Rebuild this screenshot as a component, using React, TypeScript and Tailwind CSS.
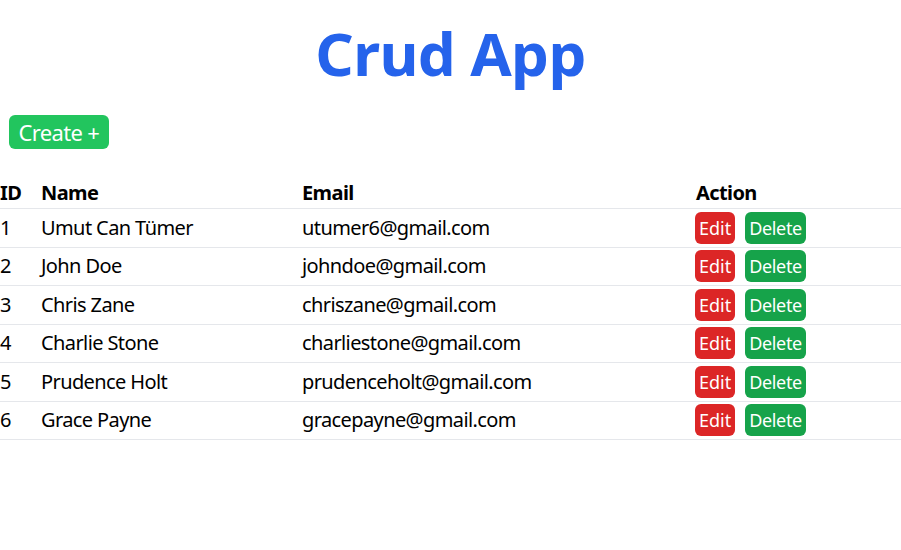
import { useState } from 'react';

interface User {
    id: number;
    name: string;
    email: string;
}

const initialUsers: User[] = [
    { id: 1, name: 'Umut Can Tümer', email: 'utumer6@gmail.com' },
    { id: 2, name: 'John Doe', email: 'johndoe@gmail.com' },
    { id: 3, name: 'Chris Zane', email: 'chriszane@gmail.com' },
    { id: 4, name: 'Charlie Stone', email: 'charliestone@gmail.com' },
    { id: 5, name: 'Prudence Holt', email: 'prudenceholt@gmail.com' },
    { id: 6, name: 'Grace Payne', email: 'gracepayne@gmail.com' },
];

export default function App() {
    const [users, setUsers] = useState<User[]>(initialUsers);

    const handleDelete = (id: number) => {
        setUsers(users.filter(u => u.id !== id));
    };

    return (
        <div className="min-h-screen bg-white text-black font-['Noto_Sans','Open_Sans',sans-serif]">
            <h1 className="pt-[23px] text-center text-6xl leading-none font-bold tracking-[-0.01em] text-[#2563eb]">Crud App</h1>

            <div className="mt-6">
                <button className="m-2 ml-[9px] rounded-md bg-[#22c55e] px-[9.5px] py-[3px] text-[22px] leading-7 tracking-[-0.03em] text-white">
                    Create +
                </button>
            </div>

            {/* 사용자 목록 */}
            <table className="mt-[13px] w-full table-fixed border-collapse text-left text-xl tracking-[-0.03em]">
                <thead>
                    <tr className="h-[38.5px] border-b border-[#e5e7eb]">
                        <th className="w-[41px] pt-2 font-bold">ID</th>
                        <th className="w-[261px] pt-2 font-bold">Name</th>
                        <th className="w-[394px] pt-2 font-bold">Email</th>
                        <th className="pt-2 font-bold">Action</th>
                    </tr>
                </thead>
                <tbody>
                    {users.map(user => (
                        <tr key={user.id} className="h-[38.5px] border-b border-[#e5e7eb]">
                            <td>{user.id}</td>
                            <td>{user.name}</td>
                            <td>{user.email}</td>
                            <td>
                                <div className="-ml-px flex items-center gap-2.5">
                                    <button className="rounded-md bg-[#dc2626] px-1 py-0.5 text-lg leading-7 tracking-normal text-white">Edit</button>
                                    <button
                                        onClick={() => handleDelete(user.id)}
                                        className="rounded-md bg-[#16a34a] px-1 py-0.5 text-lg leading-7 tracking-[-0.02em] text-white"
                                    >
                                        Delete
                                    </button>
                                </div>
                            </td>
                        </tr>
                    ))}
                </tbody>
            </table>
        </div>
    );
}
